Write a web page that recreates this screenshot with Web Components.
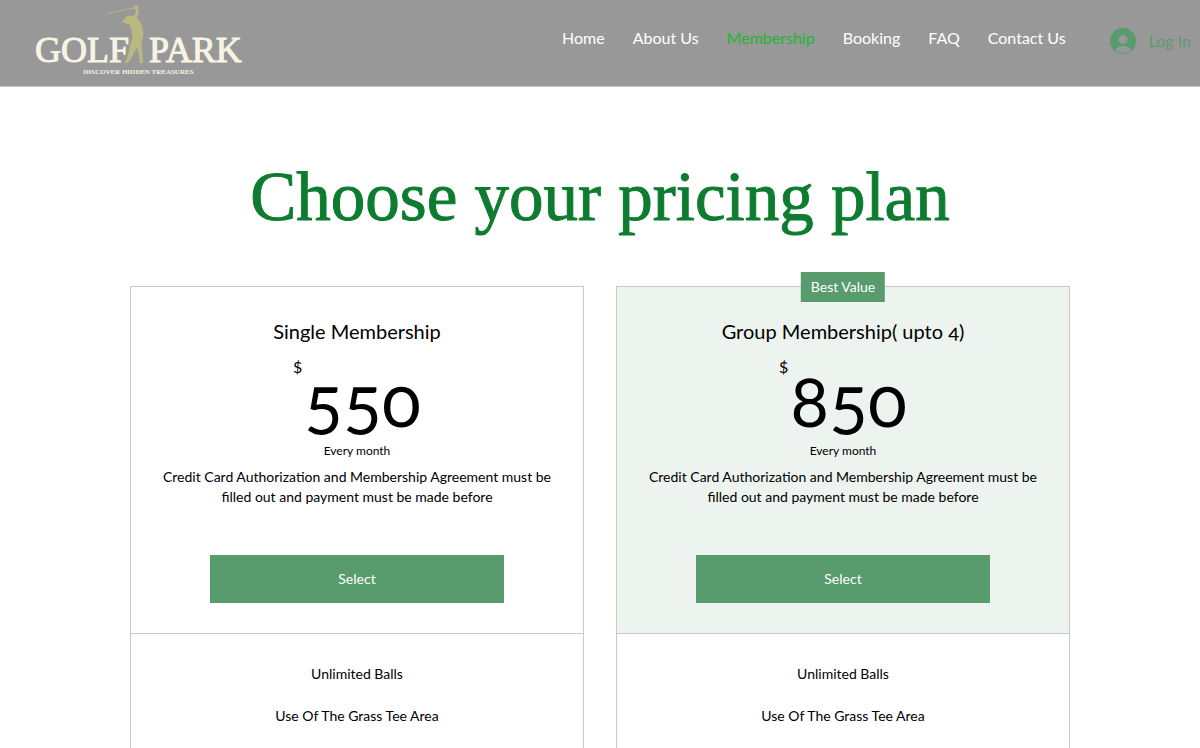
<!DOCTYPE html>
<html lang="en">
<head>
<meta charset="utf-8">
<title>Golf Park – Membership</title>
<style>
  body {
    margin: 0;
    background: #fff;
    color: #000;
    font-family: Lato, "Open Sans", sans-serif;
    --green: #589b6d;
    --line: #c8c9c9;
  }
</style>
</head>
<body>
<golf-page></golf-page>

<script>
const define = (name, html, setup) => {
  const template = document.createElement('template');
  template.innerHTML = html;
  customElements.define(name, class extends HTMLElement {
    constructor() {
      super();
      this.attachShadow({ mode: 'open' }).append(template.content.cloneNode(true));
    }
    connectedCallback() {
      if (setup) setup(this, this.shadowRoot);
    }
  });
};

define('golf-logo', `
<style>
  :host { display: block; position: relative; color: #f7f4e4; font-family: "Liberation Serif", serif; }
  a { display: block; color: inherit; text-decoration: none; text-align: center; }
  .name { display: flex; gap: 20px; padding-top: 8px; font-size: 36px; line-height: 36px; -webkit-text-stroke: 1px #f7f4e4; }
  .tag { display: block; font-size: 7px; line-height: 8px; font-weight: bold; }
  svg { position: absolute; left: 73px; bottom: 11px; width: 38px; height: 62px; }
</style>
<a href="#">
  <span class="name"><span>GOLF</span><span>PARK</span></span>
  <span class="tag">DISCOVER HIDDEN TREASURES</span>
</a>
<svg viewBox="0 0 38 62" fill="#b9b880" aria-hidden="true">
  <path fill="none" stroke="#b9b880" d="M1 12V10L26 5"/>
  <path d="M25 4 27 2 30 3 30.500 11 28.500 15Q33 18 34 24L35.500 31 33.500 40 34 47 35.500 60 31.500 60 31 51 29 44 26 50 20.500 60 17 60 20 52 22 43 24.500 35 23.500 27 21 21Q18 22 17 19.500L13 19.500 17 15Q19 12 22 13L25 13 28 10 27 6Z"/>
</svg>`);

define('nav-link', `
<style>
  :host { display: block; }
  a { color: #fff; text-decoration: none; font-size: 16px; line-height: 24px; white-space: nowrap; }
  :host([current]) a { color: #1fb62f; }
</style>
<a href="#"><slot></slot></a>`);

define('login-button', `
<style>
  :host { display: block; }
  button { display: flex; align-items: center; gap: 13px; border: 0; padding: 0; background: none; color: var(--green); font: inherit; font-size: 16px; line-height: 26px; white-space: nowrap; }
  svg { display: block; width: 26px; height: 26px; }
</style>
<button type="button">
  <svg viewBox="0 0 26 26" aria-hidden="true">
    <path fill="currentColor" fill-rule="evenodd" d="M13 0a13 13 0 1 1 0 26a13 13 0 1 1 0-26ZM13 7a4.5 4.5 0 1 0 0 9a4.5 4.5 0 1 0 0-9ZM5 22Q7 18 13 18Q19 18 21 22Q18 25 13 25Q8 25 5 22Z"/>
  </svg>
  <span><slot></slot></span>
</button>`);

define('site-header', `
<style>
  :host { display: block; background: #989898; border-bottom: 1px solid #c4c4c4; }
  header { display: flex; align-items: flex-start; justify-content: space-between; min-height: 86px; box-sizing: border-box; padding: 24px 9px 8px 35px; }
  .right { display: flex; gap: 44px; padding-top: 2px; }
  nav { display: flex; gap: 28px; }
  login-button { padding-top: 2px; }
</style>
<header>
  <golf-logo></golf-logo>
  <div class="right">
    <nav aria-label="Main">
      <nav-link>Home</nav-link>
      <nav-link>About Us</nav-link>
      <nav-link current>Membership</nav-link>
      <nav-link>Booking</nav-link>
      <nav-link>FAQ</nav-link>
      <nav-link>Contact Us</nav-link>
    </nav>
    <login-button>Log In</login-button>
  </div>
</header>`);

define('plan-card', `
<style>
  :host { display: block; position: relative; border: 1px solid var(--line); text-align: center; font-size: 14px; line-height: 20px; }
  .top { padding: 30px 30px; border-bottom: 1px solid var(--line); }
  :host([badge]) .top { background: #edf3ef; }
  .badge { display: none; position: absolute; left: 50%; top: -15px; transform: translateX(-50%); background: var(--green); color: #fff; padding: 5px 10px; white-space: nowrap; }
  :host([badge]) .badge { display: block; }
  h2 { margin: 0; font-size: 20px; line-height: 28px; font-weight: 400; font-variant-numeric: oldstyle-nums; }
  .price { display: flex; justify-content: center; gap: 2px; margin-top: 10px; }
  .currency { font-size: 16px; line-height: 24px; }
  .amount { font-size: 72px; line-height: 88px; font-variant-numeric: oldstyle-nums; }
  .period { font-size: 12px; line-height: 16px; }
  .about { margin: 8px 0 48px; }
  button { display: block; width: 75%; height: 48px; margin: 0 auto; border: 0; background: var(--green); color: #fff; font: inherit; }
  ::slotted(ul) { margin: 0; padding: 30px; list-style: none; display: grid; gap: 22px; }
</style>
<span class="badge"></span>
<div class="top">
  <h2></h2>
  <div class="price"><span class="currency">$</span><span class="amount"></span></div>
  <div class="period">Every month</div>
  <p class="about">Credit Card Authorization and Membership Agreement must be filled out and payment must be made before</p>
  <button type="button">Select</button>
</div>
<slot></slot>`, (host, root) => {
  root.querySelector('h2').textContent = host.getAttribute('name');
  root.querySelector('.amount').textContent = host.getAttribute('amount');
  root.querySelector('.badge').textContent = host.getAttribute('badge') || '';
});

define('golf-page', `
<style>
  :host { display: block; }
  main { max-width: 940px; margin: 0 auto; padding: 70px 20px 40px; }
  h1 { margin: 0; color: #0e7c30; font: 400 69px/80px "Liberation Serif", serif; -webkit-text-stroke: 1px #0e7c30; text-align: center; }
  .plans { display: grid; grid-template-columns: 1fr 1fr; gap: 32px; margin-top: 49px; }
</style>
<site-header></site-header>
<main>
  <h1>Choose your pricing plan</h1>
  <div class="plans">
    <plan-card name="Single Membership" amount="550">
      <ul><li>Unlimited Balls</li><li>Use Of The Grass Tee Area</li></ul>
    </plan-card>
    <plan-card name="Group Membership( upto 4)" amount="850" badge="Best Value">
      <ul><li>Unlimited Balls</li><li>Use Of The Grass Tee Area</li></ul>
    </plan-card>
  </div>
</main>`);
</script>
</body>
</html>
